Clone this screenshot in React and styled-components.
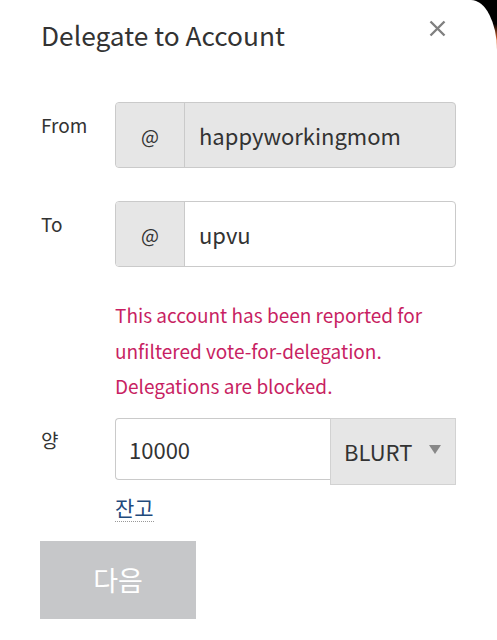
import React from 'react';
import styled, { createGlobalStyle } from 'styled-components';

const GlobalStyle = createGlobalStyle`
  html, body {
    margin: 0;
    padding: 0;
    background: #fff;
  }
  body {
    font-family: "Noto Sans CJK KR", "Noto Sans", sans-serif;
    color: #333;
  }
`

const StyledBackdrop = styled.div`
  width: 497px;
  height: 640px;
  overflow: hidden;
  background: linear-gradient(180deg, #000 0, #000 24px, #e0642b 40px, #e0642b 100%);
`
StyledBackdrop.displayName = 'StyledBackdrop'

const StyledModal = styled.div`
  box-sizing: border-box;
  height: 100%;
  background: #fff;
  border-top-right-radius: 26px 50px;
  padding: 17px 41px 0 41px;
`
StyledModal.displayName = 'StyledModal'

const StyledHeader = styled.div`
  display: flex;
  justify-content: space-between;
  align-items: flex-start;
  height: 85px;
`
StyledHeader.displayName = 'StyledHeader'

const StyledTitle = styled.h2`
  margin: 0;
  font-size: 26.3px;
  font-weight: 400;
  line-height: 36px;
  color: #333;
`
StyledTitle.displayName = 'StyledTitle'

const StyledClose = styled.button`
  border: 0;
  background: none;
  padding: 0;
  margin: 3px 10px 0 0;
  width: 17px;
  height: 17px;
  display: flex;
  cursor: pointer;
`
StyledClose.displayName = 'StyledClose'

const StyledRow = styled.div`
  display: grid;
  grid-template-columns: 74px 341px;
  align-items: start;
  margin-bottom: ${p => p.gap || 0}px;
`
StyledRow.displayName = 'StyledRow'

const StyledLabel = styled.div`
  font-size: 19px;
  line-height: 28px;
  padding-top: ${p => p.offset || 9}px;
  color: #333;
`
StyledLabel.displayName = 'StyledLabel'

const StyledGroup = styled.div`
  display: flex;
  height: 66px;
  box-sizing: border-box;
  border: 1px solid #cacaca;
  border-radius: 4px;
  overflow: hidden;
  background: ${p => (p.disabled ? '#e6e6e6' : '#fff')};
`
StyledGroup.displayName = 'StyledGroup'

const StyledAddon = styled.span`
  width: 68px;
  flex: none;
  display: flex;
  align-items: center;
  justify-content: center;
  background: #e6e6e6;
  border-right: 1px solid #cacaca;
  font-size: 19px;
  color: #333;
`
StyledAddon.displayName = 'StyledAddon'

const StyledValue = styled.span`
  flex: 1;
  display: flex;
  align-items: center;
  padding-left: 14px;
  font-size: 22px;
  color: #333;
`
StyledValue.displayName = 'StyledValue'

const StyledError = styled.div`
  grid-column: 2;
  font-size: 19px;
  line-height: 35.5px;
  color: #c81f63;
`
StyledError.displayName = 'StyledError'

const StyledAmount = styled.div`
  display: flex;
  align-items: flex-start;
`
StyledAmount.displayName = 'StyledAmount'

const StyledAmountInput = styled.div`
  box-sizing: border-box;
  width: 215px;
  height: 62px;
  display: flex;
  align-items: center;
  padding-left: 13px;
  border: 1px solid #cacaca;
  border-right: 0;
  border-radius: 4px 0 0 4px;
  font-size: 22px;
  color: #333;
`
StyledAmountInput.displayName = 'StyledAmountInput'

const StyledSelect = styled.div`
  box-sizing: border-box;
  width: 126px;
  height: 67px;
  display: flex;
  align-items: center;
  justify-content: space-between;
  padding: 0 14px 0 13px;
  background: #e6e6e6;
  border: 1px solid #d2d2d2;
  font-size: 22px;
  color: #333;
`
StyledSelect.displayName = 'StyledSelect'

const StyledCaret = styled.span`
  width: 0;
  height: 0;
  border-left: 6px solid transparent;
  border-right: 6px solid transparent;
  border-top: 9px solid #888;
  margin-top: -3px;
`
StyledCaret.displayName = 'StyledCaret'

const StyledBalance = styled.a`
  grid-column: 2;
  justify-self: start;
  margin-top: 8px;
  font-size: 21px;
  line-height: 28px;
  color: #1f4a7c;
  text-decoration: none;
  border-bottom: 1px dotted #999;
  cursor: pointer;
`
StyledBalance.displayName = 'StyledBalance'

const StyledButton = styled.button`
  display: flex;
  align-items: center;
  justify-content: center;
  width: 156px;
  height: 78px;
  margin: 19px 0 0 -1px;
  border: 0;
  background: #c6c7c9;
  color: #fff;
  font-family: inherit;
  font-size: 27px;
  cursor: not-allowed;
`
StyledButton.displayName = 'StyledButton'

const CloseIcon = () => (
  <svg width="17" height="17" viewBox="0 0 17 17">
    <path d="M1.5 1.5 L15.5 15.5 M15.5 1.5 L1.5 15.5" stroke="#808080" strokeWidth="2.4" strokeLinecap="butt" />
  </svg>
);

export default function App() {
  return (
    <>
      <GlobalStyle />
      <StyledBackdrop>
        <StyledModal>
          <StyledHeader>
            <StyledTitle>Delegate to Account</StyledTitle>
            <StyledClose aria-label="close"><CloseIcon /></StyledClose>
          </StyledHeader>

          <StyledRow gap={33}>
            <StyledLabel>From</StyledLabel>
            <StyledGroup disabled>
              <StyledAddon>@</StyledAddon>
              <StyledValue>happyworkingmom</StyledValue>
            </StyledGroup>
          </StyledRow>

          <StyledRow gap={30}>
            <StyledLabel>To</StyledLabel>
            <StyledGroup>
              <StyledAddon>@</StyledAddon>
              <StyledValue>upvu</StyledValue>
            </StyledGroup>
          </StyledRow>

          <StyledRow gap={14}>
            <StyledError>
              This account has been reported for<br />
              unfiltered vote-for-delegation.<br />
              Delegations are blocked.
            </StyledError>
          </StyledRow>

          <StyledRow>
            <StyledLabel offset={8}>양</StyledLabel>
            <StyledAmount>
              <StyledAmountInput>10000</StyledAmountInput>
              <StyledSelect>
                BLURT
                <StyledCaret />
              </StyledSelect>
            </StyledAmount>
            <StyledBalance>잔고</StyledBalance>
          </StyledRow>

          <StyledButton disabled>다음</StyledButton>
        </StyledModal>
      </StyledBackdrop>
    </>
  );
}
